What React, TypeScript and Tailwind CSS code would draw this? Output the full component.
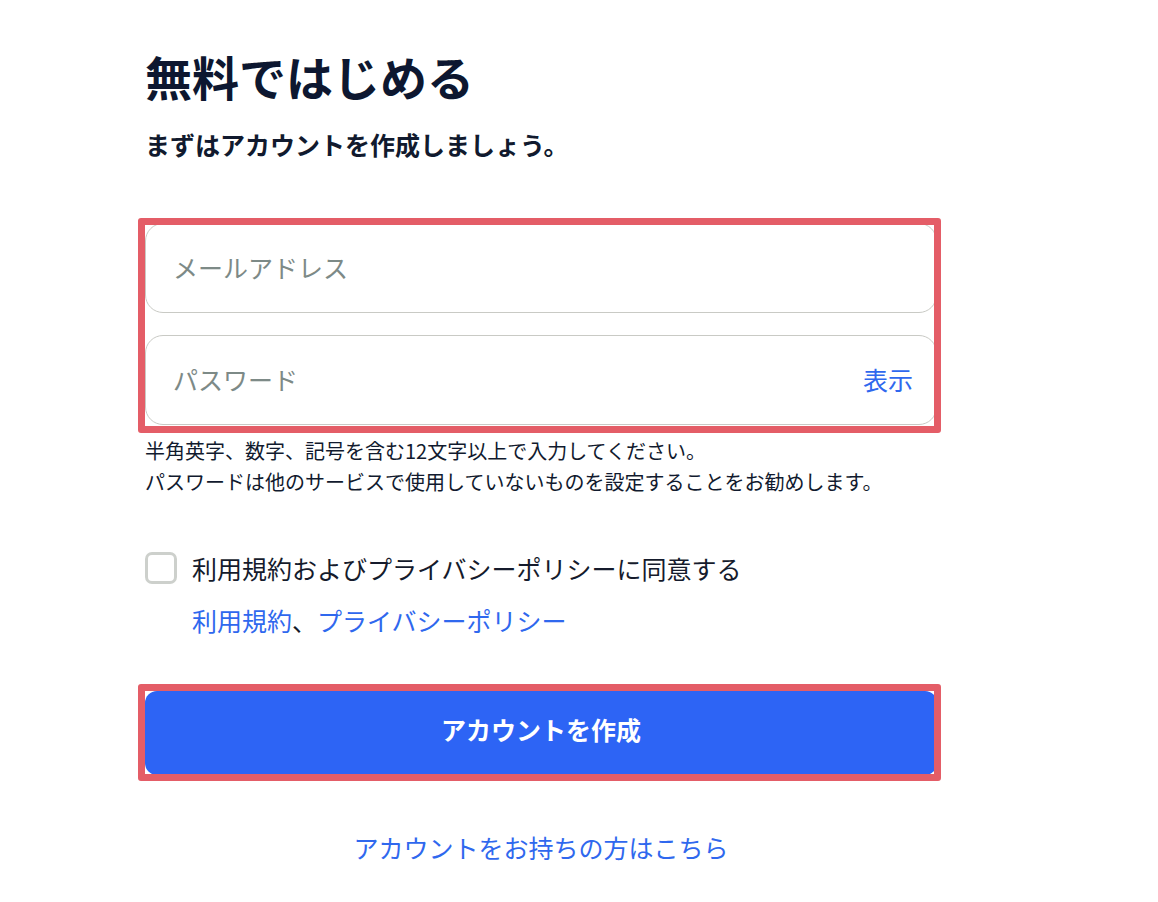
import { useState } from 'react'

const font = { fontFamily: '"Noto Sans CJK JP", "Noto Sans", sans-serif' }

export default function App() {
  const [agreed, setAgreed] = useState(false)

  return (
    <div className="min-h-screen bg-white" style={font}>
      <div className="w-[792px] ml-[145px] pt-[46px]">
        <h1 className="text-[47px] leading-[60px] font-bold text-[#0d1730]">無料ではじめる</h1>
        <p className="mt-[20px] text-[25px] leading-[36px] font-bold text-[#111a2e]">
          まずはアカウントを作成しましょう。
        </p>

        {/* Inputs (highlighted) */}
        <div className="relative mt-[61px]">
          <div className="flex flex-col gap-[22px]">
            <div className="h-[90px] rounded-[18px] border border-[#c9cac5] bg-white flex items-center px-[27px]">
              <span className="text-[25px] text-[#7d8a87]">メールアドレス</span>
            </div>
            <div className="h-[90px] rounded-[18px] border border-[#c9cac5] bg-white flex items-center justify-between px-[27px]">
              <span className="text-[25px] text-[#7d8a87]">パスワード</span>
              <span className="text-[25px] text-[#2f68ee] mr-[-4px]">表示</span>
            </div>
          </div>
          <div className="pointer-events-none absolute left-[-7px] top-[-5px] right-[-4px] bottom-[-8px] border-[7px] border-[#e45d67] rounded-[3px]" />
        </div>

        <div className="mt-[10px] text-[20px] leading-[31px] text-[#111a2e]">
          <p>半角英字、数字、記号を含む12文字以上で入力してください。</p>
          <p>パスワードは他のサービスで使用していないものを設定することをお勧めします。</p>
        </div>

        {/* Agreement */}
        <label className="mt-[53px] flex items-center gap-[15px] cursor-pointer">
          <span
            onClick={() => setAgreed(!agreed)}
            className={`w-[32px] h-[32px] rounded-[7px] border-[3px] ${agreed ? 'border-[#2d64f5] bg-[#2d64f5]' : 'border-[#cdd0cc] bg-white'}`}
          />
          <span className="text-[25px] leading-[36px] text-[#151b2c]">利用規約およびプライバシーポリシーに同意する</span>
        </label>
        <p className="mt-[16px] pl-[47px] text-[25px] leading-[36px] text-[#151b2c]">
          <a className="text-[#2f68ee]">利用規約</a>、<a className="text-[#2f68ee]">プライバシーポリシー</a>
        </p>

        {/* Submit (highlighted) */}
        <div className="relative mt-[53px]">
          <button className="w-full h-[84px] rounded-[12px] bg-[#2d64f5] text-white text-[25px] font-bold flex items-center justify-center pb-[6px]">
            アカウントを作成
          </button>
          <div className="pointer-events-none absolute left-[-7px] top-[-7px] right-[-4px] bottom-[-6px] border-[7px] border-[#e45d67] rounded-[3px]" />
        </div>

        <p className="mt-[54px] text-center text-[25px] leading-[36px] text-[#2f68ee]">
          アカウントをお持ちの方はこちら
        </p>
      </div>
    </div>
  )
}
